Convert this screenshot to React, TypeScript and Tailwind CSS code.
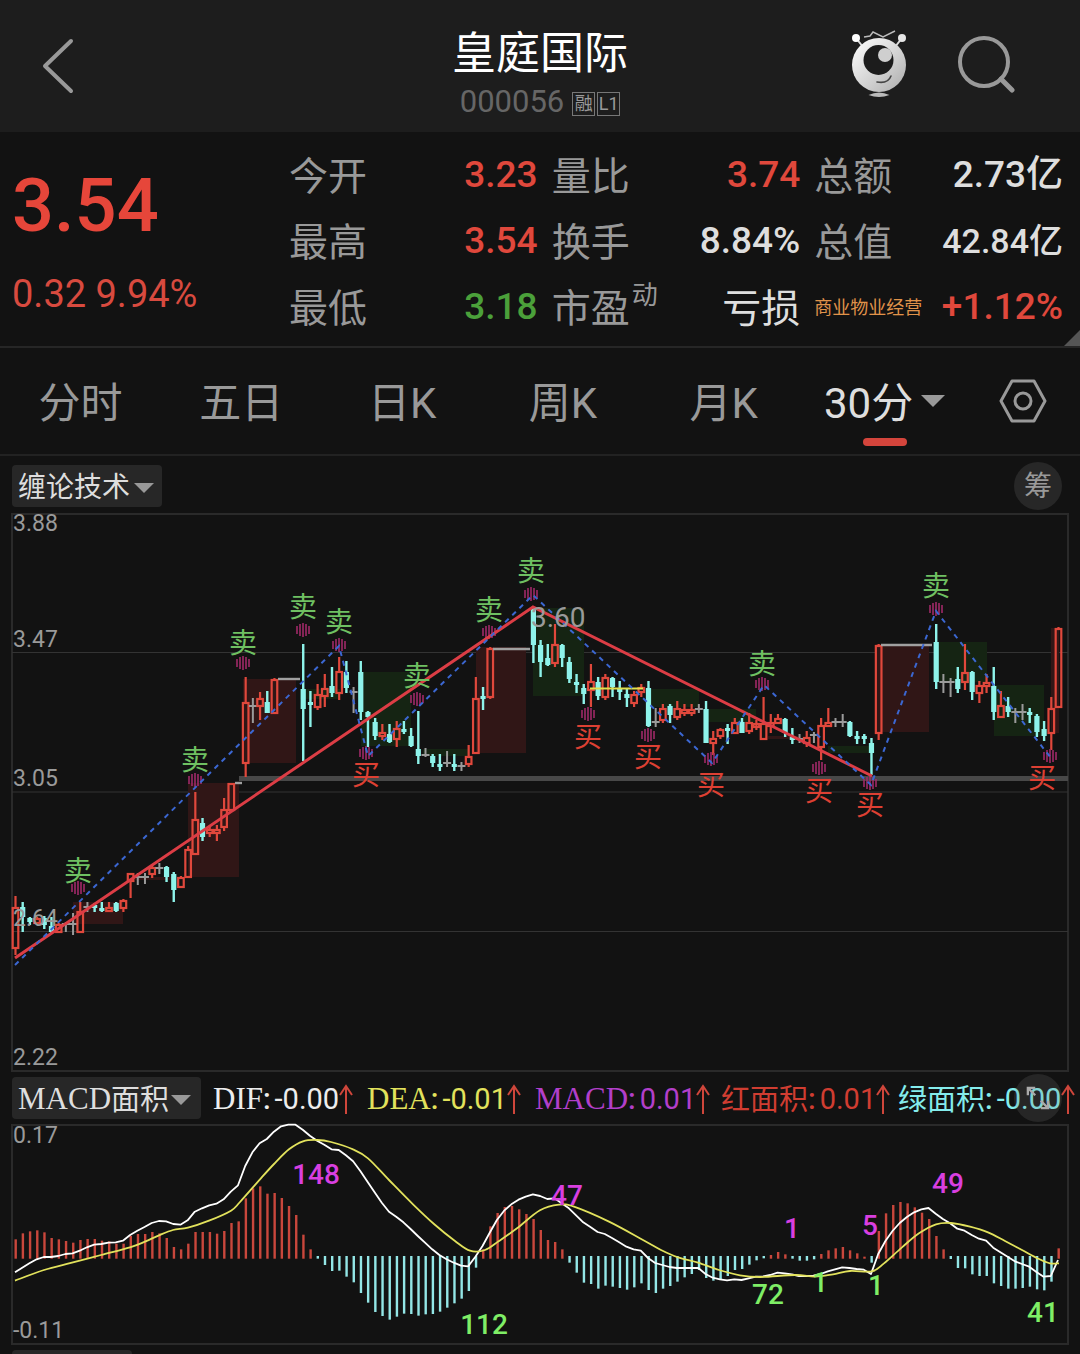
import React from "react";

type Kind = "r" | "c" | "g";
type Candle = [number, Kind, number, number, number, number];

// index, kind, high, body top, body bottom, low
const candles: Candle[] = [
  [0, "r", 896, 907, 948, 955], [1, "c", 902, 907, 917, 932], [2, "c", 917, 918, 922, 925],
  [3, "r", 917, 918, 923, 925], [4, "c", 916, 918, 925, 929], [5, "c", 917, 926, 932, 933],
  [6, "r", 923, 924, 932, 932], [7, "g", 922, 924, 924, 932], [8, "g", 913, 924, 924, 935],
  [9, "r", 902, 911, 932, 932], [10, "g", 902, 907, 907, 912], [11, "c", 903, 905, 907, 912],
  [12, "c", 902, 908, 910, 912], [13, "r", 902, 907, 911, 911], [14, "c", 902, 903, 911, 912],
  [15, "r", 899, 900, 908, 912], [16, "r", 873, 873, 881, 898], [17, "g", 873, 877, 877, 885],
  [18, "g", 873, 877, 877, 884], [19, "r", 865, 867, 874, 878], [20, "g", 863, 868, 868, 874],
  [21, "c", 866, 867, 877, 882], [22, "c", 872, 874, 890, 902], [23, "r", 876, 877, 887, 887],
  [24, "r", 846, 849, 877, 877], [25, "r", 792, 819, 854, 854], [26, "c", 818, 823, 837, 841],
  [27, "r", 827, 829, 833, 837], [28, "r", 825, 829, 833, 841], [29, "r", 798, 809, 827, 831],
  [30, "r", 783, 783, 810, 810], [32, "r", 677, 702, 763, 777], [33, "g", 698, 706, 706, 723],
  [34, "r", 692, 698, 706, 720], [35, "c", 691, 702, 713, 713], [36, "r", 678, 679, 713, 713],
  [40, "c", 644, 689, 709, 761], [41, "c", 691, 702, 705, 727], [42, "r", 684, 694, 707, 710],
  [43, "r", 674, 688, 696, 707], [44, "c", 667, 686, 693, 697], [45, "r", 657, 671, 693, 700],
  [46, "c", 661, 672, 688, 693], [47, "g", 687, 692, 692, 713], [48, "c", 661, 672, 712, 720],
  [49, "c", 711, 712, 717, 747], [50, "c", 718, 722, 736, 740], [51, "r", 724, 732, 736, 740],
  [52, "c", 724, 734, 742, 743], [53, "r", 721, 728, 739, 747], [54, "c", 721, 729, 732, 734],
  [55, "c", 728, 736, 746, 747], [56, "c", 711, 749, 756, 764], [57, "g", 748, 755, 755, 757],
  [58, "c", 754, 756, 763, 767], [59, "c", 754, 764, 767, 771], [60, "g", 751, 763, 763, 767],
  [61, "c", 754, 764, 767, 771], [62, "g", 762, 766, 766, 771], [63, "r", 745, 756, 764, 767],
  [64, "r", 677, 698, 753, 753], [65, "c", 687, 696, 699, 710], [66, "r", 647, 648, 697, 699],
  [72, "c", 608, 609, 645, 663], [73, "c", 640, 645, 662, 677], [74, "c", 644, 658, 665, 666],
  [75, "r", 624, 644, 663, 667], [76, "c", 644, 645, 658, 667], [77, "c", 657, 662, 679, 683],
  [78, "c", 674, 682, 685, 693], [79, "c", 684, 688, 694, 704], [80, "r", 664, 681, 690, 707],
  [81, "c", 677, 682, 696, 700], [82, "r", 674, 677, 697, 700], [83, "c", 677, 678, 687, 697],
  [84, "c", 681, 689, 691, 700], [85, "c", 688, 694, 698, 707], [86, "r", 691, 694, 703, 707],
  [87, "r", 684, 687, 692, 697], [88, "c", 681, 688, 726, 727], [89, "g", 708, 722, 722, 727],
  [90, "r", 704, 708, 720, 723], [91, "c", 704, 706, 715, 723], [92, "r", 701, 708, 717, 720],
  [93, "r", 704, 709, 712, 716], [94, "r", 704, 709, 712, 716], [95, "g", 704, 709, 709, 713],
  [96, "c", 701, 709, 743, 743], [97, "r", 731, 738, 743, 755], [98, "r", 728, 729, 736, 739],
  [99, "c", 724, 728, 731, 744], [100, "r", 718, 722, 733, 733], [101, "c", 718, 722, 733, 733],
  [102, "r", 713, 722, 731, 734], [103, "r", 720, 723, 725, 730], [104, "r", 697, 723, 739, 739],
  [105, "r", 714, 722, 726, 733], [106, "r", 714, 718, 723, 723], [107, "c", 718, 719, 733, 737],
  [108, "c", 728, 737, 738, 744], [109, "g", 734, 739, 739, 743], [110, "r", 731, 737, 743, 747],
  [111, "g", 732, 735, 735, 743], [112, "r", 718, 725, 747, 760], [113, "r", 708, 722, 726, 726],
  [114, "g", 718, 722, 722, 727], [115, "g", 714, 722, 722, 727], [116, "c", 721, 722, 736, 737],
  [117, "c", 731, 736, 738, 744], [118, "c", 734, 736, 738, 744], [119, "c", 738, 743, 753, 775],
  [120, "r", 644, 645, 733, 740], [128, "c", 624, 642, 682, 689], [129, "g", 674, 682, 682, 693],
  [130, "g", 678, 682, 682, 697], [131, "c", 667, 679, 689, 693], [132, "r", 644, 672, 682, 690],
  [133, "c", 671, 672, 692, 700], [134, "r", 681, 685, 693, 703], [135, "r", 674, 682, 685, 693],
  [136, "c", 667, 686, 712, 720], [137, "r", 691, 705, 717, 717], [138, "c", 697, 706, 712, 717],
  [139, "g", 708, 712, 712, 723], [140, "g", 704, 712, 712, 720], [141, "c", 708, 712, 715, 723],
  [142, "c", 714, 716, 732, 737], [143, "c", 721, 729, 736, 741], [144, "r", 697, 708, 733, 750],
  [145, "r", 627, 628, 707, 707],
];

// Runs where the price is locked and only a dash is drawn: x1, x2, y
const flats = [[235, 242, 783], [278, 300, 679], [493, 530, 649], [881, 932, 645]];

const redZones = [
  [73, 902, 50, 22], [135, 877, 40, 3], [188, 783, 51, 94], [243, 679, 53, 84], [476, 647, 50, 106],
  [768, 736, 32, 3], [876, 644, 53, 88], [1051, 628, 8, 105],
];
const greenZones = [
  [300, 689, 40, 10], [361, 672, 50, 74], [423, 749, 45, 7], [533, 608, 51, 88], [648, 689, 51, 18],
  [707, 709, 49, 13], [828, 746, 42, 7], [938, 642, 49, 40], [994, 685, 50, 51],
];

// label x, label y, burst x, burst y
const sells = [
  [78, 871, 78, 888], [195, 760, 195, 780], [243, 643, 243, 663], [303, 607, 303, 630],
  [339, 622, 339, 645], [417, 676, 417, 699], [489, 610, 489, 632], [531, 571, 531, 594],
  [762, 664, 762, 684], [936, 586, 936, 609],
];
const buys = [
  [366, 775, 366, 753], [588, 737, 588, 714], [648, 757, 648, 735], [711, 785, 711, 759],
  [819, 791, 819, 768], [870, 805, 870, 783], [1042, 778, 1050, 756],
];

const bars = [
  598, 580, 574, 571, 577, 594, 598, 603, 608, 600, 597, 597, 602, 604, 611, 611, 588, 582, 582, 576,
  580, 594, 621, 628, 611, 576, 576, 576, 581, 573, 549, 544, 475, 445, 439, 461, 459, 474, 498, 525,
  584, 628, 656, 675, 693, 692, 710, 727, 759, 788, 816, 828, 839, 830, 821, 822, 827, 823, 822, 815,
  803, 790, 776, 753, 683, 628, 559, 519, 501, 498, 508, 522, 537, 570, 600, 606, 628, 668, 698, 728,
  732, 746, 737, 740, 744, 749, 742, 730, 750, 759, 746, 738, 725, 712, 702, 690, 714, 722, 717, 708,
  690, 687, 674, 661, 655, 645, 636, 643, 656, 662, 662, 658, 642, 631, 625, 621, 631, 640, 650, 668,
  573, 520, 495, 486, 490, 502, 518, 537, 588, 628, 657, 684, 685, 703, 708, 708, 730, 738, 746, 746,
  744, 740, 748, 751, 725, 625,
];

const dif = [
  697, 683, 670, 658, 651, 651, 648, 642, 640, 632, 622, 614, 612, 608, 607, 602, 585, 572, 561, 549,
  543, 544, 552, 554, 541, 515, 505, 496, 491, 478, 455, 436, 378, 337, 310, 297, 275, 259, 254, 254,
  269, 287, 302, 314, 328, 330, 346, 364, 393, 425, 457, 488, 515, 530, 547, 567, 588, 608, 628, 645,
  658, 668, 677, 679, 650, 618, 578, 540, 512, 493, 479, 470, 463, 468, 477, 475, 490, 505, 526, 547,
  561, 576, 582, 594, 607, 620, 628, 632, 654, 669, 675, 681, 684, 684, 684, 684, 702, 713, 718, 721,
  718, 720, 715, 710, 709, 705, 698, 700, 703, 708, 708, 707, 702, 694, 688, 682, 684, 687, 689, 702,
  642, 603, 573, 549, 531, 517, 508, 504, 521, 537, 550, 566, 572, 585, 596, 602, 623, 637, 650, 664,
  672, 680, 696, 710, 708, 660,
];

const dea: [number, number][] = [
  [15, 722], [44, 690], [72, 668], [101, 645], [130, 622], [145, 605], [159, 586], [173, 570], [188, 563],
  [209, 542], [231, 512], [240, 486], [260, 418], [274, 372], [289, 328], [303, 304], [317, 300],
  [331, 306], [353, 328], [368, 355], [389, 420], [413, 493], [434, 552], [455, 603], [470, 632],
  [485, 630], [499, 603], [517, 565], [540, 511], [559, 494], [574, 500], [609, 545], [643, 600],
  [661, 630], [678, 652], [698, 668], [719, 690], [740, 706], [760, 711], [795, 705], [815, 710],
  [833, 703], [850, 693], [872, 694], [884, 670], [902, 622], [919, 580], [936, 553], [951, 549],
  [970, 560], [988, 577], [1005, 603], [1022, 630], [1039, 657], [1050, 670], [1059, 670],
];

const areas: [number, number, string, string][] = [
  [316, 1184, "148", "#d93fe0"], [567, 1205, "47", "#d93fe0"], [792, 1238, "1", "#d93fe0"],
  [870, 1235, "5", "#d93fe0"], [948, 1193, "49", "#d93fe0"], [484, 1334, "112", "#7fee66"],
  [768, 1304, "72", "#7fee66"], [820, 1292, "1", "#7fee66"], [876, 1295, "1", "#7fee66"],
  [1043, 1322, "41", "#7fee66"],
];

const barX = (i: number) => 15 + i * 7.193;
const levelY = (v: number) => 1040 + v / 3;

const difPath = dif.map((v, i) => `${i ? "L" : "M"}${barX(i).toFixed(1)} ${levelY(v).toFixed(1)}`).join("");

function smooth(points: [number, number][]) {
  const p = points.map(([x, v]) => [x, levelY(v)]);
  let d = `M${p[0][0]} ${p[0][1]}`;
  for (let i = 0; i < p.length - 1; i++) {
    const a = p[Math.max(0, i - 1)];
    const b = p[i];
    const c = p[i + 1];
    const e = p[Math.min(p.length - 1, i + 2)];
    d += `C${b[0] + (c[0] - a[0]) / 6} ${b[1] + (c[1] - a[1]) / 6} ${c[0] - (e[0] - b[0]) / 6} ${c[1] - (e[1] - b[1]) / 6} ${c[0]} ${c[1]}`;
  }
  return d;
}

const numFont = "font-['Roboto','Noto_Sans_CJK_SC',sans-serif]";

function CandleMark({ data }: { data: Candle }) {
  const [i, kind, high, top, bottom, low] = data;
  const x = barX(i) + 0.5;
  if (kind === "g")
    return (
      <path d={`M${x} ${high}V${low}M${x - 4} ${top}H${x + 4}`} stroke="#9a9a9a" strokeWidth="2" fill="none" />
    );
  if (kind === "c")
    return (
      <g fill="#8ef3ea">
        <rect x={x - 1.2} y={high} width="2.4" height={low - high} />
        <rect x={x - 2.6} y={top} width="5.2" height={Math.max(3, bottom - top)} />
      </g>
    );
  return (
    <g stroke="#e0483c" strokeWidth="2.2" fill="none">
      <path d={`M${x} ${high}V${top}M${x} ${bottom}V${low}`} />
      <rect x={x - 2.8} y={top + 1} width="5.6" height={Math.max(3, bottom - top - 1)} />
    </g>
  );
}

function Burst({ x, y }: { x: number; y: number }) {
  return (
    <path
      d={`M${x - 6} ${y - 4}v8M${x - 3} ${y - 6}v12M${x} ${y - 7}v14M${x + 3} ${y - 6}v12M${x + 6} ${y - 4}v8`}
      stroke="#a02a68"
      strokeWidth="1.6"
    />
  );
}

function PriceChart() {
  return (
    <svg viewBox="11 513 1058 559" className={`block h-auto w-full overflow-visible ${numFont}`} role="img" aria-label="30分K线图">
      <rect x="12" y="514" width="1056" height="557" stroke="#2a2a2a" strokeWidth="2" fill="none" />
      <path d="M12 652.5H1068M12 792H1068M12 931.5H1068" stroke="#333" strokeWidth="1.2" />
      {redZones.map(([x, y, w, h]) => (
        <rect key={x} x={x} y={y} width={w} height={h} fill="#301616" />
      ))}
      {greenZones.map(([x, y, w, h]) => (
        <rect key={x} x={x} y={y} width={w} height={h} fill="#152413" />
      ))}
      <path d="M239 778.5H1068" stroke="#484848" strokeWidth="5" />
      {candles.map((c) => (
        <CandleMark key={c[0]} data={c} />
      ))}
      {flats.map(([a, b, y]) => (
        <path key={a} d={`M${a} ${y}H${b}`} stroke="#a0a0a0" strokeWidth="2.4" />
      ))}
      <path d="M590 688.5H643" stroke="#e0e04c" strokeWidth="2" />
      {[...sells, ...buys].map(([, , x, y]) => (
        <Burst key={`${x}-${y}`} x={x} y={y} />
      ))}
      <path d="M15 958L533 607L872 776" stroke="#dc3d45" strokeWidth="3" fill="none" />
      <path
        d="M15 965L339 646L368 756L533 595L712 763L764 685L871 785L936 611L1051 758"
        stroke="#3b67d2"
        strokeWidth="2"
        strokeDasharray="5 5"
        fill="none"
      />
      <g fontSize="28" textAnchor="middle">
        {sells.map(([x, y]) => (
          <text key={x} x={x} y={y + 10} fill="#6fc062">卖</text>
        ))}
        {buys.map(([x, y]) => (
          <text key={x} x={x} y={y + 10} fill="#dd4033">买</text>
        ))}
      </g>
      <g fontSize="23" fill="#9a9a9a">
        <text x="13" y="531">3.88</text>
        <text x="13" y="647">3.47</text>
        <text x="13" y="786">3.05</text>
        <text x="13" y="926">2.64</text>
        <text x="13" y="1065">2.22</text>
      </g>
      <text x="531" y="627" fontSize="28" fill="#9a9a9a">3.60</text>
    </svg>
  );
}

function MacdChart() {
  return (
    <svg viewBox="11 1124 1058 221" className={`block h-auto w-full overflow-visible ${numFont}`} role="img" aria-label="MACD面积图">
      <rect x="12" y="1125" width="1056" height="219" stroke="#2a2a2a" strokeWidth="2" fill="none" />
      {bars.map((v, i) => {
        const up = v < 654;
        const y = levelY(v);
        return (
          <rect
            key={i}
            x={barX(i) - 0.5}
            y={up ? y : 1256}
            width="2.4"
            height={up ? 1258.7 - y : Math.max(1, y - 1256)}
            fill={up ? "#c9473c" : "#93e6e6"}
          />
        );
      })}
      <path d={difPath} stroke="#fff" strokeWidth="1.8" fill="none" strokeLinejoin="round" />
      <path d={smooth(dea)} stroke="#e2e25c" strokeWidth="1.8" fill="none" />
      <g fontSize="28" textAnchor="middle" className="font-medium">
        {areas.map(([x, y, t, c]) => (
          <text key={x} x={x} y={y} fill={c}>{t}</text>
        ))}
      </g>
      <g fontSize="23" fill="#9a9a9a">
        <text x="13" y="1143">0.17</text>
        <text x="13" y="1338">-0.11</text>
      </g>
    </svg>
  );
}

function Alien() {
  return (
    <svg viewBox="0 0 56 68" className="h-[68px] w-14" aria-hidden="true">
      <defs>
        <linearGradient id="head" x1="0" y1="0" x2="1" y2="1">
          <stop offset="0" stopColor="#fff" />
          <stop offset="0.6" stopColor="#cfcfcf" />
          <stop offset="1" stopColor="#aaa" />
        </linearGradient>
      </defs>
      <path d="M5 8L12 17M51 8L44 17" stroke="#ddd" strokeWidth="2" />
      <circle cx="5" cy="8" r="4" fill="#fff" />
      <circle cx="51" cy="8" r="4" fill="#e6e6e6" />
      <path d="M13 7L19 6L22 2L32 7L44 1" stroke="#bbb" strokeWidth="1.4" fill="none" />
      <circle cx="28" cy="35" r="27" fill="url(#head)" />
      <circle cx="27.5" cy="30" r="15" fill="#1c1c1c" />
      <circle cx="34" cy="25" r="7" fill="#cfcfcf" />
      <path d="M26 52Q37 54 40 46" stroke="#444" strokeWidth="1.6" fill="none" strokeLinecap="round" />
      <path d="M17.5 65Q28 60 38.5 65Q28 69 17.5 65Z" fill="#bbb" />
    </svg>
  );
}

function Caret({ className }: { className: string }) {
  return (
    <svg viewBox="0 0 20 10" className={className} aria-hidden="true">
      <path d="M0 0H20L10 10Z" fill="#999" />
    </svg>
  );
}

function Quote({ label, sup, value, tone }: { label: string; sup?: string; value: string; tone: string }) {
  return (
    <div className="flex h-[66px] items-center justify-between whitespace-nowrap">
      <dt className="flex pt-1 text-[39px] leading-[60px] text-[#999]">
        {label}
        {sup && <sup className="top-0 ml-0.5 text-[26px] leading-8">{sup}</sup>}
      </dt>
      <dd className={`leading-[60px] ${tone}`}>{value}</dd>
    </div>
  );
}

const red = "text-[37px] font-medium text-[#e0483c]";
const white = "text-[37px] font-medium text-[#dedede]";

const metrics = [
  { name: "DIF", value: "-0.00", tone: "text-[#ededed]" },
  { name: "DEA", value: "-0.01", tone: "text-[#e2e25c]" },
  { name: "MACD", value: "0.01", tone: "text-[#b23fca]" },
  { name: "红面积", value: "0.01", tone: "text-[#d03d31]" },
  { name: "绿面积", value: "-0.00", tone: "text-[#84ecec]" },
];

const serif = "font-['Liberation_Serif','Noto_Sans_CJK_SC',serif]";

export default function App() {
  return (
    <main className={`w-full overflow-x-hidden bg-[#121212] ${numFont}`}>
      <header className="grid h-[132px] grid-cols-[1fr_auto_1fr] items-center bg-[#1d1d1d]">
        <button aria-label="返回" className="ml-[42px] w-8">
          <svg viewBox="0 0 32 56" className="h-14 w-8" fill="none">
            <path d="M29 3L3 28L29 53" stroke="#999" strokeWidth="4" strokeLinecap="round" strokeLinejoin="round" />
          </svg>
        </button>
        <div className="flex flex-col items-center pt-4">
          <h1 className="text-[44px] leading-[56px] text-white">皇庭国际</h1>
          <p className="flex h-10 items-center text-[31px] leading-10 text-[#666]">
            000056
            <span className="ml-2 flex gap-0.5 pt-1 text-[18px] leading-[22px] text-[#999]">
              <span className="w-[23px] border border-[#777] text-center">融</span>
              <span className="w-[23px] border border-[#777] text-center">L1</span>
            </span>
          </p>
        </div>
        <div className="mr-[65px] flex items-center justify-end gap-[50px]">
          <button aria-label="助手" className="-mt-1"><Alien /></button>
          <button aria-label="搜索" className="-mt-1">
            <svg viewBox="0 0 58 58" className="size-[58px]" fill="none" stroke="#999" strokeWidth="4" strokeLinecap="round">
              <circle cx="27" cy="27" r="24" />
              <path d="M44 44L55 55" strokeWidth="5" />
            </svg>
          </button>
        </div>
      </header>

      <section className="relative flex h-[216px] border-b-2 border-[#262626] pt-[10px]">
        <div className="w-[289px] pl-3">
          <p className="pt-[18px] text-[74px] leading-[92px] font-medium text-[#e6463a]">3.54</p>
          <p className="mt-5 text-[38px] leading-[44px] whitespace-nowrap text-[#d84a3f]">0.32 9.94%</p>
        </div>
        <dl className="mr-[17px] grid flex-1 grid-cols-3 content-start gap-x-[14px]">
          <Quote label="今开" value="3.23" tone={red} />
          <Quote label="量比" value="3.74" tone={red} />
          <Quote label="总额" value="2.73亿" tone={white} />
          <Quote label="最高" value="3.54" tone={red} />
          <Quote label="换手" value="8.84%" tone={white} />
          <Quote label="总值" value="42.84亿" tone="text-[34px] font-medium text-[#dedede]" />
          <Quote label="最低" value="3.18" tone="text-[37px] font-medium text-[#4ba03a]" />
          <Quote label="市盈" sup="动" value="亏损" tone="pt-1 text-[39px] text-[#dedede]" />
          <div className="flex h-[66px] items-center justify-between whitespace-nowrap">
            <dt className="text-[18px] text-[#e0934a]">商业物业经营</dt>
            <dd className={`leading-[60px] ${red}`}>+1.12%</dd>
          </div>
        </dl>
        <svg viewBox="0 0 16 16" className="absolute right-0 bottom-0 size-4" aria-hidden="true">
          <path d="M16 0V16H0Z" fill="#555" />
        </svg>
      </section>

      <nav className="flex h-[108px] items-center border-b-2 border-[#222] text-[42px] leading-[60px] text-[#999]">
        <div className="flex flex-1 pt-1.5">
          {["分时", "五日", "日K", "周K", "月K"].map((t) => (
            <button key={t} className="flex-1 basis-0 whitespace-nowrap">{t}</button>
          ))}
          <button aria-current="true" className="relative flex flex-1 basis-0 items-center justify-center whitespace-nowrap text-[#dedede]">
            30分
            <Caret className="mb-1.5 ml-2 h-3 w-6" />
            <span className="absolute -bottom-3 h-2 w-11 rounded-full bg-[#d4453c]" />
          </button>
        </div>
        <button aria-label="设置" className="flex w-[115px] justify-center">
          <svg viewBox="0 0 48 44" className="h-11 w-12" fill="none" stroke="#999" strokeWidth="3" strokeLinejoin="round">
            <path d="M13 2H35L46 22L35 42H13L2 22Z" />
            <circle cx="24" cy="22" r="8" />
          </svg>
        </button>
      </nav>

      <div className="flex h-[57px] items-center justify-between pt-1 pr-[18px] pl-3">
        <button className="mb-0.5 flex h-[42px] items-center rounded bg-[#272727] pr-2 pl-1.5 text-[28px] leading-[42px] text-[#dedede]">
          <span className="pt-1">缠论技术</span>
          <Caret className="mt-1 ml-1 h-2.5 w-5" />
        </button>
        <button aria-label="筹码" className="mb-0.5 size-12 rounded-full bg-[#272727] pt-0.5 text-[28px] leading-[46px] text-[#999]">筹</button>
      </div>

      <div className="px-[11px]">
        <PriceChart />
      </div>

      <div className={`relative flex h-[52px] items-center pr-1 pl-3 text-[31px] leading-[42px] whitespace-nowrap ${serif}`}>
        <button className="flex h-[42px] w-[189px] items-center rounded bg-[#272727] pl-1.5 text-[#dedede]">
          <span className="pt-0.5">MACD</span>
          <span className="pt-1 text-[29px]">面积</span>
          <Caret className="mt-1 ml-0.5 h-2.5 w-5" />
        </button>
        <div className="ml-3 grid flex-1 grid-cols-[154fr_168fr_186fr_177fr_178fr]">
          {metrics.map((m) => (
            <div key={m.name} className={`flex items-center pt-0.5 ${m.tone}`}>
              <span className={m.name.endsWith("积") ? "pt-0.5 text-[29px]" : ""}>{m.name}</span>
              <span className={`text-[29px] font-medium ${numFont}`}>:</span>
              <span className={`ml-1 text-[29px] ${numFont}`}>{m.value}</span>
              <svg viewBox="0 0 14 30" className="h-[30px] w-3.5 shrink-0" fill="none" stroke="#cf463b" strokeWidth="2">
                <path d="M7 30V2M1 11L7 2L13 11" />
              </svg>
            </div>
          ))}
        </div>
        <button aria-label="全屏" className="absolute top-0.5 right-[18px] grid size-12 place-items-center rounded-full bg-[#777]/20">
          <svg viewBox="0 0 26 26" className="size-6" fill="none" stroke="#aaa" strokeWidth="2.5">
            <path d="M10 10L2 2M2 10V2H10M16 16L24 24M24 16V24H16" />
          </svg>
        </button>
      </div>

      <div className="px-[11px]">
        <MacdChart />
      </div>
      <div className="mt-[5px] ml-3 h-1 w-[120px] rounded-t bg-[#272727]" />
    </main>
  );
}
